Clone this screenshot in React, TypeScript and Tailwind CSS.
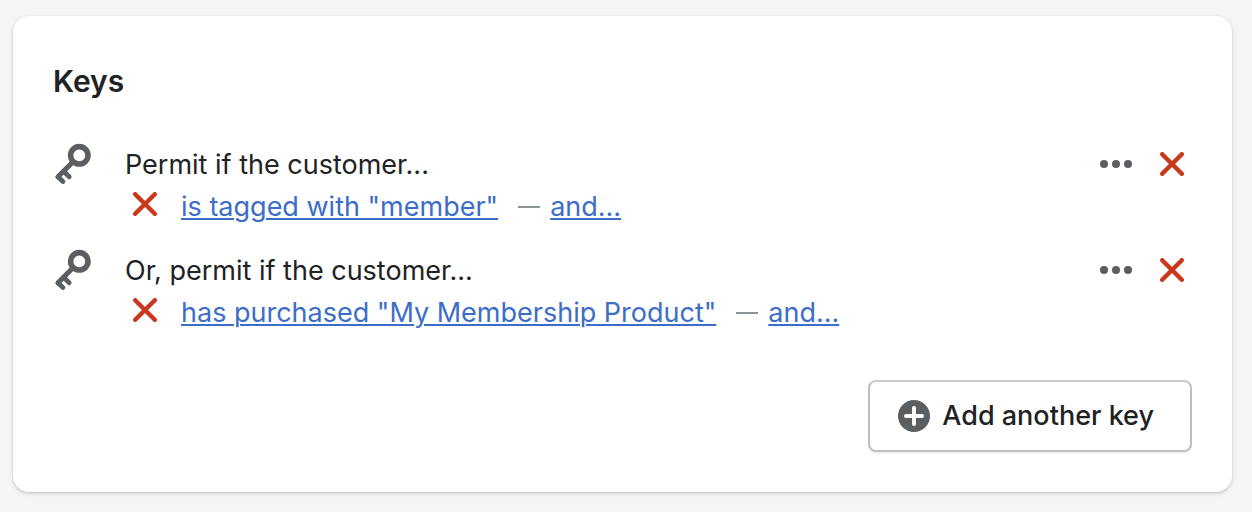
type Key = { lead: string; condition: string };

const keys: Key[] = [
  { lead: 'Permit if the customer...', condition: 'is tagged with "member"' },
  { lead: 'Or, permit if the customer...', condition: 'has purchased "My Membership Product"' },
];

function KeyIcon() {
  return (
    <svg className="h-[42px] w-10 shrink-0" viewBox="0 0 40 42" fill="none" stroke="#5c5f62" aria-hidden="true">
      <circle cx="26.3" cy="12.3" r="8.7" strokeWidth="5.6" />
      <path d="M20 18.7L5 33.8" strokeWidth="5" strokeLinecap="round" />
      <path d="M5 33.8L9.9 38.5M10.6 28.2L16.2 33.8" strokeWidth="4.8" strokeLinecap="round" />
    </svg>
  );
}

function CrossIcon() {
  return (
    <svg className="size-6" viewBox="0 0 24 24" fill="none" stroke="#c9371c" strokeWidth="4.4" strokeLinecap="round" aria-hidden="true">
      <path d="M2.2 2.2L21.8 21.8M21.8 2.2L2.2 21.8" />
    </svg>
  );
}

function DotsIcon() {
  return (
    <svg className="h-8 w-8" viewBox="0 0 32 32" fill="#5c5f62" aria-hidden="true">
      <circle cx="4" cy="16" r="4" />
      <circle cx="16" cy="16" r="4" />
      <circle cx="28" cy="16" r="4" />
    </svg>
  );
}

function PlusIcon() {
  return (
    <svg className="size-8" viewBox="0 0 32 32" fill="none" aria-hidden="true">
      <circle cx="16" cy="16" r="16" fill="#5c5f62" />
      <path d="M16 8V24M8 16H24" stroke="#fff" strokeWidth="4" strokeLinecap="round" />
    </svg>
  );
}

const linkClass = 'text-[#3c6dc9] underline decoration-2 underline-offset-2';

function KeyRow({ lead, condition }: Key) {
  return (
    <li className="flex items-start">
      <KeyIcon />
      <div className="ml-8 min-w-0 flex-1 pt-px leading-[42px]">
        <p>{lead}</p>
        <div className="flex items-center">
          <button type="button" aria-label="Remove condition" className="mx-2 mb-1.5">
            <CrossIcon />
          </button>
          <a href="#condition" className={`ml-4 ${linkClass}`}>{condition}</a>
          <span className="ml-5 h-0.5 w-[22px] bg-[#8c9196]" />
          <a href="#and" className={`ml-2.5 ${linkClass}`}>and...</a>
        </div>
      </div>
      <div className="mr-2 flex h-[42px] items-center gap-7">
        <button type="button" aria-label="More actions"><DotsIcon /></button>
        <button type="button" aria-label="Remove key"><CrossIcon /></button>
      </div>
    </li>
  );
}

export default function App() {
  return (
    <main className="min-h-screen bg-[#f5f5f5] pt-4 pr-5 pb-5 pl-[13px] font-['Inter','Liberation_Sans',sans-serif] text-[27px] text-[#202223]">
      <section className="rounded-2xl bg-white p-10 shadow-[0_1px_3px_rgba(0,0,0,0.18),0_2px_6px_rgba(0,0,0,0.06)]">
        <h2 className="text-[30px] leading-[50px] font-semibold">Keys</h2>
        <ul className="mt-[37px] flex flex-col gap-[21px]">
          {keys.map((key) => <KeyRow key={key.lead} {...key} />)}
        </ul>
        <div className="mt-[46px] flex justify-end">
          <button type="button" className="flex h-[72px] items-center gap-3 rounded-lg border-2 border-[#babfc3] border-t-[#c9cccf] bg-white pr-9 pl-7 font-medium shadow-[0_2px_0_rgba(0,0,0,0.05)]">
            <PlusIcon />
            Add another key
          </button>
        </div>
      </section>
    </main>
  );
}
